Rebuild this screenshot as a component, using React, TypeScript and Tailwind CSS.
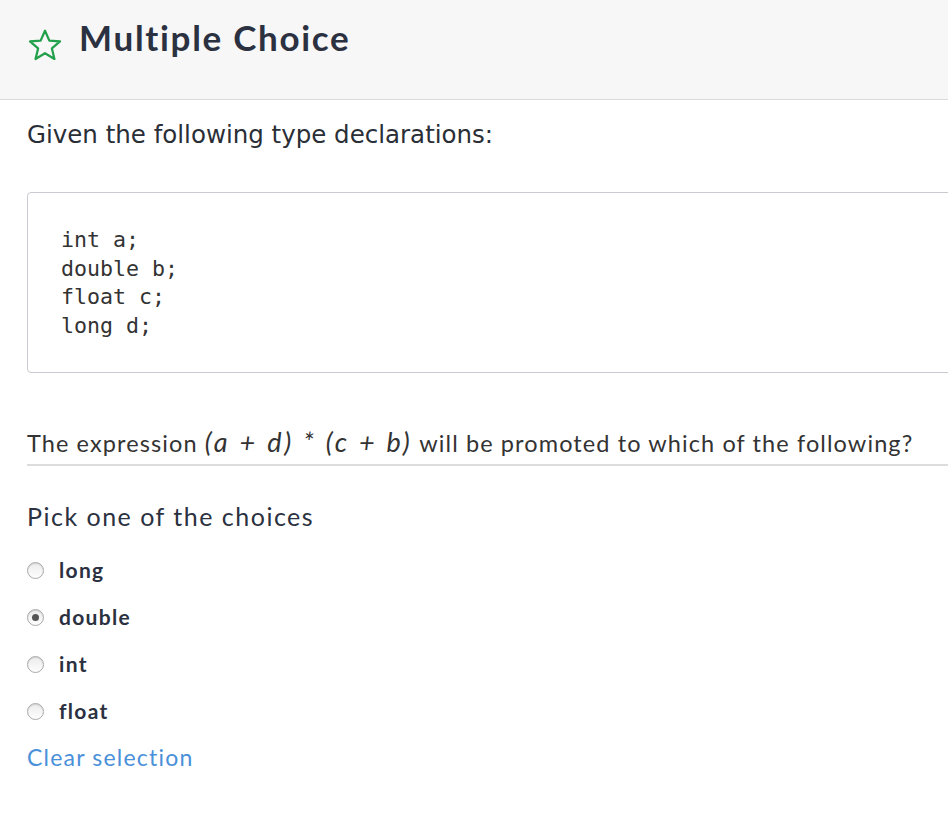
import { useState } from 'react'

const choices = ['long', 'double', 'int', 'float']

function StarIcon() {
  return (
    <svg width="38" height="36" viewBox="0 0 24 24" fill="none" stroke="#22a04b" strokeWidth="1.5" strokeLinejoin="round">
      <polygon points="12,2.5 14.9,9.1 22,9.6 16.6,14.3 18.3,21.3 12,17.5 5.7,21.3 7.4,14.3 2,9.6 9.1,9.1" />
    </svg>
  )
}

export default function App() {
  const [picked, setPicked] = useState<string | null>('double')

  return (
    <div className="w-[948px] min-h-[821px] overflow-hidden bg-white text-[#2d3340]">
      {/* Header */}
      <div className="h-[100px] bg-[#f7f7f8] border-b border-[#dcdcdf] flex items-start pl-[26px] pt-[15px] gap-[15px]">
        <div className="mt-[12px]">
          <StarIcon />
        </div>
        <h1 className="text-[35px] font-bold text-[#2b3140] font-['Lato',sans-serif] leading-[44px] tracking-[1.7px]">
          Multiple Choice
        </h1>
      </div>

      <div className="pl-[27px] w-[1000px]">
        <p className="mt-[19px] text-[24.5px] leading-[32px] text-[#2a2e36] font-['DejaVu_Sans',sans-serif]">
          Given the following type declarations:
        </p>

        {/* Code block */}
        <div className="mt-[41px] h-[181px] border border-[#c9cbd0] rounded-[4px] pl-[33px] pt-[33px]">
          <pre className="font-['DejaVu_Sans_Mono',monospace] text-[21.6px] leading-[28.5px] text-[#333]">
{`int a;
double b;
float c;
long d;`}
          </pre>
        </div>

        {/* Question */}
        <div className="mt-[54px] w-[921px] border-b-2 border-[#dddddd] pb-[6px] font-['Lato',sans-serif] text-[23.5px] leading-[30px] text-[#333] tracking-[1.1px] whitespace-nowrap">
          The expression{' '}
          <span className="italic text-[27px] tracking-[2.8px]">(a + d) * (c + b)</span>{' '}
          will be promoted to which of the following?
        </div>

        <h2 className="mt-[33px] text-[25px] leading-[34px] font-['Lato',sans-serif] text-[#2b3140] tracking-[1.5px]">
          Pick one of the choices
        </h2>

        <div className="mt-[22px] flex flex-col gap-[17px]">
          {choices.map(c => (
            <label key={c} className="flex items-center gap-[15px] h-[30px] cursor-pointer">
              <span
                onClick={() => setPicked(c)}
                className="w-[17px] h-[17px] rounded-full border border-[#a9a9a9] bg-gradient-to-b from-[#ececec] to-[#fdfdfd] flex items-center justify-center shadow-[inset_0_1px_1px_rgba(0,0,0,0.12)]"
              >
                {picked === c && <span className="w-[7px] h-[7px] rounded-full bg-[#555]" />}
              </span>
              <span className="font-['Lato',sans-serif] font-bold text-[21px] text-[#2b3140] tracking-[1.3px]">{c}</span>
            </label>
          ))}
        </div>

        <button
          onClick={() => setPicked(null)}
          className="mt-[14px] text-[23px] leading-[34px] text-[#4a90d9] font-['Lato',sans-serif] tracking-[1.2px]"
        >
          Clear selection
        </button>
      </div>
    </div>
  )
}
